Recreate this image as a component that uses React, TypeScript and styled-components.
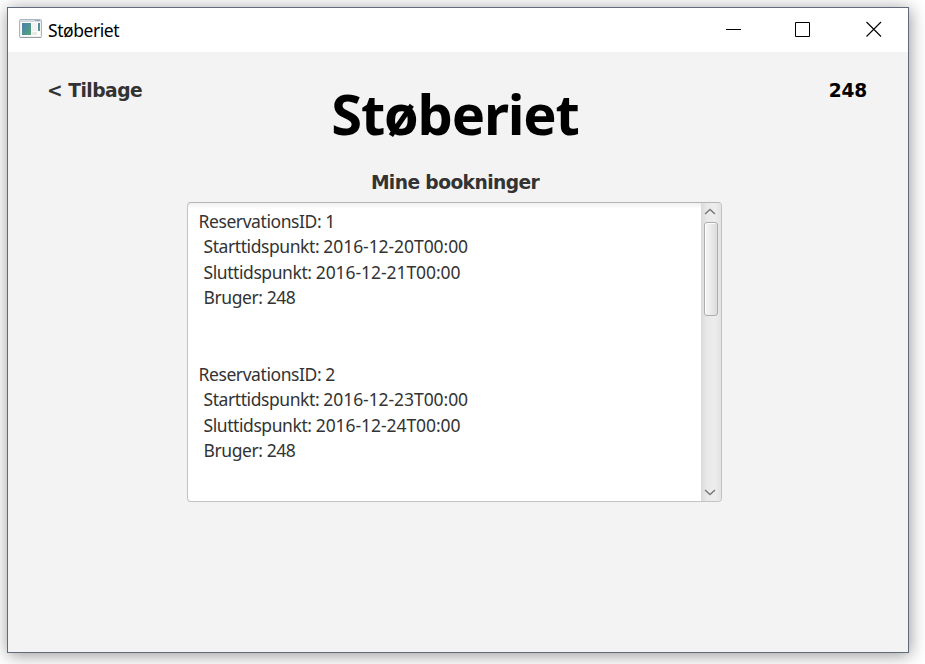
import React from 'react';
import styled, { createGlobalStyle } from 'styled-components';

const GlobalStyle = createGlobalStyle`
  html, body { margin: 0; height: 100%; background: #fff; overflow: hidden; }
  *, *::before, *::after { box-sizing: border-box; }
`;

const Desktop = styled.div`
  width: 925px;
  height: 664px;
  padding: 7px 0 0 7px;
  overflow: hidden;
`;

const Window = styled.div`
  width: 902px;
  height: 646px;
  display: flex;
  flex-direction: column;
  border: 1px solid #5f6b78;
  background: #f3f3f3;
  box-shadow: 1px 2px 16px rgba(0, 0, 0, 0.42);
`;

const TitleBar = styled.header`
  height: 44px;
  flex: none;
  display: flex;
  align-items: center;
  background: #fff;
  padding: 0 26px 2px 11px;
  font: 17.5px/42px 'Noto Sans', sans-serif;
  color: #000;
`;

const TitleText = styled.span`
  flex: 1;
  margin-left: 6px;
  letter-spacing: -0.45px;
  padding-top: 2px;
`;

const Controls = styled.div`
  display: flex;
  gap: 53px;
  svg { display: block; }
`;

const Content = styled.main`
  flex: 1;
  display: grid;
  grid-template-columns: 179px 535px 1fr;
  grid-template-rows: 150px 300px;
`;

const Link = styled.a`
  margin: 27px 0 0 39px;
  font: bold 18.7px/24px 'DejaVu Sans', sans-serif;
  letter-spacing: -0.5px;
  color: #333;
  white-space: nowrap;
`;

const UserId = styled.div`
  margin: 27px 41px 0 0;
  text-align: right;
  font: bold 18.6px/24px 'DejaVu Sans', sans-serif;
  letter-spacing: -0.2px;
  color: #000;
`;

const Heading = styled.div`
  display: flex;
  flex-direction: column;
  align-items: center;
  padding-left: 1px;
`;

const Title = styled.h1`
  margin: 21px 0 0;
  font: bold 56px/80px 'Noto Sans', sans-serif;
  letter-spacing: -1.2px;
  color: #000;
`;

const Subtitle = styled.h2`
  margin: 18px 0 0;
  font: bold 18.7px/24px 'DejaVu Sans', sans-serif;
  letter-spacing: -0.6px;
  color: #333;
`;

const ListBox = styled.section`
  grid-column: 2;
  display: flex;
  border: 1px solid #c3c3c3;
  border-top-color: #b5b5b5;
  border-radius: 4px;
  background: linear-gradient(#f0f0f0, #fff 6px);
  overflow: hidden;
`;

const Entries = styled.div`
  flex: 1;
  padding: 5.5px 0 0 10.5px;
`;

const Entry = styled.div`
  height: 153px;
`;

const Line = styled.div<{ $indent?: boolean }>`
  height: 25.5px;
  padding-left: ${(p) => (p.$indent ? 5 : 0)}px;
  font: 17.5px/25.5px 'Noto Sans', sans-serif;
  letter-spacing: -0.42px;
  color: #333;
  white-space: nowrap;
`;

const Timestamp = styled.span`
  letter-spacing: -0.07px;
`;

const ScrollBar = styled.div`
  width: 20px;
  display: flex;
  flex-direction: column;
  align-items: center;
  padding: 5px 3px 5px 1px;
  background: linear-gradient(90deg, #dadada, #e9e9e9 30%, #ededed 70%, #e2e2e2);
  svg { display: block; flex: none; }
`;

const Thumb = styled.div`
  width: 14px;
  height: 94px;
  margin: 7px 0 auto 1px;
  border: 1px solid #adadad;
  border-radius: 3px;
  background: linear-gradient(90deg, #f6f6f6, #e9e9e9 55%, #dcdcdc);
  box-shadow: inset 1px 1px 0 #fff;
`;

const AppIcon = () => (
  <svg width="23" height="20" viewBox="0 0 23 20">
    <defs>
      <linearGradient id="pane" x1="0" y1="0" x2="1" y2="1">
        <stop offset="0" stopColor="#4d7eae" />
        <stop offset="1" stopColor="#4fa678" />
      </linearGradient>
    </defs>
    <rect x="0.5" y="0.5" width="22" height="18" rx="1" fill="#eef0f2" stroke="#aeb5bf" />
    <path d="M1 18.5H22" stroke="#979da5" />
    <path d="M1 2H22" stroke="#d2dae4" strokeWidth="2" />
    <path d="M16 1.5H21" stroke="#98a9bd" />
    <rect x="2" y="3" width="19" height="14" fill="#fff" />
    <rect x="3" y="4" width="9" height="12" fill="url(#pane)" />
    <rect x="13" y="4" width="5" height="8" fill="#f1f1ed" />
    <rect x="13" y="13" width="5" height="3" fill="#e8e9e4" />
    <rect x="19" y="4" width="2" height="8" fill="url(#pane)" />
  </svg>
);

const Chevron = ({ down }: { down?: boolean }) => (
  <svg width="12" height="7" viewBox="0 0 12 7">
    <path d={down ? 'M1 1L6 5.5L11 1' : 'M1 6L6 1.5L11 6'} fill="none" stroke="#777" strokeWidth="1.4" />
  </svg>
);

const bookings = [
  { id: 1, start: '2016-12-20T00:00', end: '2016-12-21T00:00', user: 248 },
  { id: 2, start: '2016-12-23T00:00', end: '2016-12-24T00:00', user: 248 },
];

export default function App() {
  return (
    <>
      <GlobalStyle />
      <Desktop>
        <Window>
          <TitleBar>
            <AppIcon />
            <TitleText>Støberiet</TitleText>
            <Controls>
              <svg width="16" height="16" viewBox="0 0 16 16">
                <path d="M0 8.5H15" stroke="#000" />
              </svg>
              <svg width="16" height="16" viewBox="0 0 16 16">
                <path d="M0.5 1.5H14.5V15.5H0.5Z" fill="none" stroke="#000" />
              </svg>
              <svg width="18" height="16" viewBox="-2 0 18 16">
                <path d="M0.5 1L15 15.5M15 1L0.5 15.5" stroke="#000" strokeWidth="1.1" />
              </svg>
            </Controls>
          </TitleBar>
          <Content>
            <Link>&lt; Tilbage</Link>
            <Heading>
              <Title>Støberiet</Title>
              <Subtitle>Mine bookninger</Subtitle>
            </Heading>
            <UserId>248</UserId>
            <ListBox>
              <Entries>
                {bookings.map((b) => (
                  <Entry key={b.id}>
                    <Line>ReservationsID: {b.id}</Line>
                    <Line $indent>
                      Starttidspunkt: <Timestamp>{b.start}</Timestamp>
                    </Line>
                    <Line $indent>
                      Sluttidspunkt: <Timestamp>{b.end}</Timestamp>
                    </Line>
                    <Line $indent>Bruger: {b.user}</Line>
                  </Entry>
                ))}
              </Entries>
              <ScrollBar>
                <Chevron />
                <Thumb />
                <Chevron down />
              </ScrollBar>
            </ListBox>
          </Content>
        </Window>
      </Desktop>
    </>
  );
}
